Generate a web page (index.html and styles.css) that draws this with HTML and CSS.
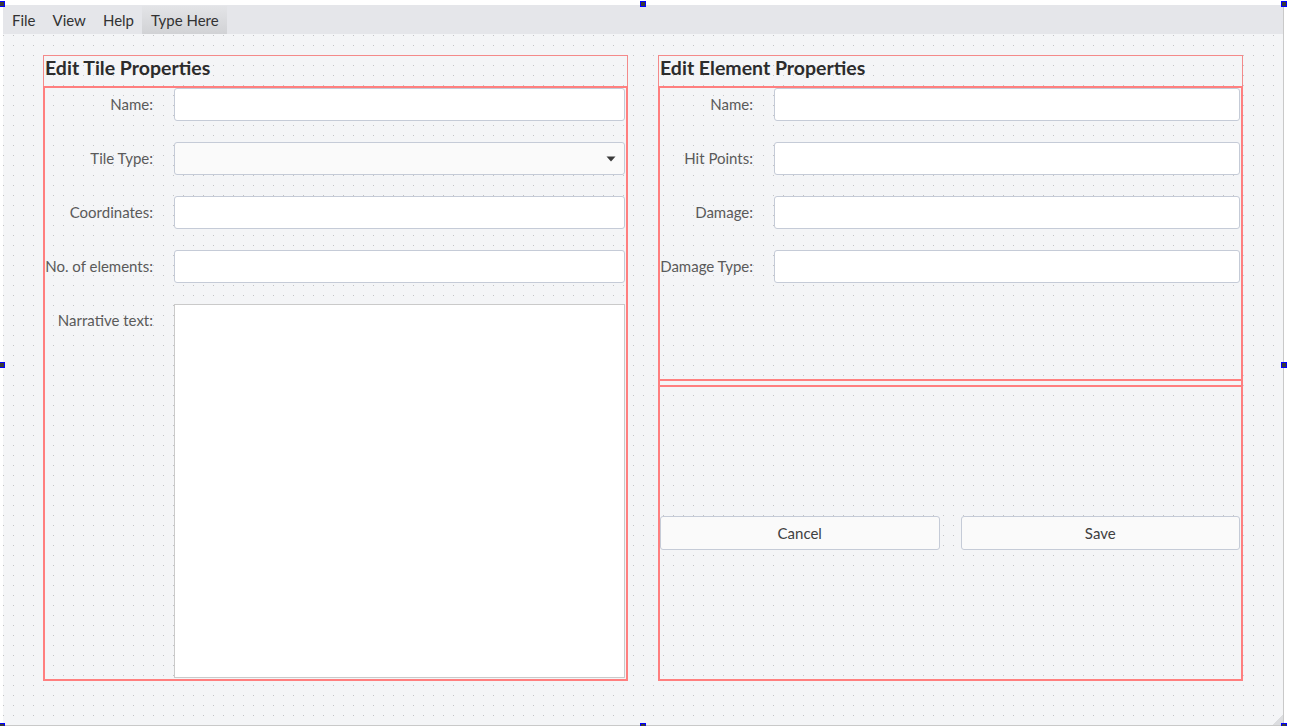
FILE: index.html
```html
<!DOCTYPE html>
<html>
<head>
<meta charset="utf-8">
<link rel="stylesheet" href="styles.css">
</head>
<body>
<div class="form">
  <div class="menubar">
    <span class="mi">File</span>
    <span class="mi">View</span>
    <span class="mi">Help</span>
    <span class="mi mi-active">Type Here</span>
  </div>
  <div class="canvas">
    <section class="panel">
      <div class="title">Edit Tile Properties</div>
      <div class="formbox formbox-tile">
        <span class="lbl">Name:</span><div class="input"></div>
        <span class="lbl">Tile Type:</span>
        <div class="input combo">
          <svg class="arrow" width="10" height="6" viewBox="0 0 10 6"><path d="M0.5 0.5 H9.5 L5 5.5 Z" fill="#3a3a3a"/></svg>
        </div>
        <span class="lbl">Coordinates:</span><div class="input"></div>
        <span class="lbl">No. of elements:</span><div class="input"></div>
        <span class="lbl">Narrative text:</span><div class="textarea"></div>
      </div>
    </section>
    <section class="panel">
      <div class="title">Edit Element Properties</div>
      <div class="stack">
        <div class="formbox formbox-element">
          <span class="lbl">Name:</span><div class="input"></div>
          <span class="lbl">Hit Points:</span><div class="input"></div>
          <span class="lbl">Damage:</span><div class="input"></div>
          <span class="lbl">Damage Type:</span><div class="input"></div>
        </div>
        <div class="btnbox">
          <button class="btn">Cancel</button>
          <button class="btn">Save</button>
        </div>
      </div>
    </section>
  </div>
  <div class="grip"></div>
</div>
<div class="handle h-tl"></div>
<div class="handle h-tc"></div>
<div class="handle h-tr"></div>
<div class="handle h-ml"></div>
<div class="handle h-mr"></div>
<div class="handle h-bl"></div>
<div class="handle h-bc"></div>
<div class="handle h-br"></div>
</body>
</html>
```

FILE: styles.css
```css
html, body {
  margin: 0;
  padding: 0;
  background: #ffffff;
  overflow: hidden;
}
body {
  position: relative;
  width: 1290px;
  height: 726px;
  font-family: Lato, "Open Sans", sans-serif;
}
.form {
  position: relative;
  margin: 5px 0 0 3px;
  width: 1280px;
  height: 720px;
  border-right: 1px solid #c9c9c9;
  border-bottom: 1px solid #c9c9c9;
  background: #f4f5f7;
  display: flex;
  flex-direction: column;
}
.menubar {
  height: 29px;
  background: #e5e6ea;
  display: flex;
  align-items: stretch;
  flex: none;
}
.mi {
  padding: 1px 8px 0 9px;
  line-height: 29px;
  font-size: 15px;
  color: #323232;
}
.mi-active {
  margin: 1px 0 0;
  padding-top: 0;
  line-height: 28px;
  background: linear-gradient(#e3e4e7, #d1d2d5);
}
.canvas {
  flex: 1;
  display: flex;
  gap: 30px;
  padding: 21px 0 0 40px;
  background-color: #f4f5f7;
  background-image:
    linear-gradient(90deg, transparent 1px, #f4f5f7 1px),
    linear-gradient(#c3c4c6 1px, transparent 1px);
  background-size: 10px 10px;
  background-position: 0 1px;
}
.panel {
  width: 585px;
  height: 626px;
  display: flex;
  flex-direction: column;
}
.title {
  box-sizing: border-box;
  height: 31px;
  border: 1px solid #f48a8a;
  border-bottom: none;
  padding: 0 0 0 1px;
  font-size: 19.5px;
  font-weight: 700;
  line-height: 24px;
  color: #2c2c2c;
}
.formbox {
  box-sizing: border-box;
  display: grid;
  column-gap: 21px;
  row-gap: 21px;
  grid-auto-rows: 33px;
  align-content: start;
}
.formbox-tile {
  flex: 1;
  border: 2px solid #ff7f7f;
  grid-template-columns: 108px 1fr;
  grid-template-rows: 33px 33px 33px 33px 1fr;
  padding-bottom: 1px;
}
.stack {
  flex: 1;
  display: flex;
  flex-direction: column;
  gap: 4px;
  border-left: 2px solid #ff7f7f;
  border-right: 2px solid #ff7f7f;
}
.formbox-element {
  height: 295px;
  border-top: 2px solid #ff7f7f;
  border-bottom: 2px solid #ff7f7f;
  grid-template-columns: 93px 1fr;
}
.lbl {
  text-align: right;
  font-size: 15px;
  line-height: 33px;
  color: #5a5a5a;
  white-space: nowrap;
}
.input {
  box-sizing: border-box;
  height: 33px;
  margin-right: 1px;
  background: #ffffff;
  border: 1px solid #c5cbd7;
  border-radius: 3px;
}
.combo {
  position: relative;
  background: #fafafa;
}
.arrow {
  position: absolute;
  right: 8px;
  top: 13px;
}
.textarea {
  box-sizing: border-box;
  margin-right: 1px;
  background: #ffffff;
  border: 1px solid #cacaca;
}
.btnbox {
  flex: 1;
  border-top: 2px solid #ff7f7f;
  border-bottom: 2px solid #ff7f7f;
  display: flex;
  align-items: center;
  gap: 21px;
  padding-right: 1px;
}
.btn {
  flex: 1;
  height: 34px;
  margin: 0;
  background: #fafafa;
  border: 1px solid #c5cbd7;
  border-radius: 3px;
  font-family: Lato, "Open Sans", sans-serif;
  font-size: 15px;
  color: #404040;
}
.grip {
  position: absolute;
  right: 0;
  bottom: 0;
  width: 10px;
  height: 10px;
  background: linear-gradient(135deg, transparent 50%, #dcdde0 50%);
}
.handle {
  position: absolute;
  width: 4px;
  height: 4px;
  background: #3a3a3a;
  border: 1px solid #0000ff;
}
.h-tl { left: -1px; top: 1px; }
.h-tc { left: 640px; top: 1px; }
.h-tr { left: 1281px; top: 1px; }
.h-ml { left: -1px; top: 362px; }
.h-mr { left: 1281px; top: 362px; }
.h-bl { left: -1px; top: 723px; }
.h-bc { left: 640px; top: 723px; }
.h-br { left: 1281px; top: 723px; }
```
